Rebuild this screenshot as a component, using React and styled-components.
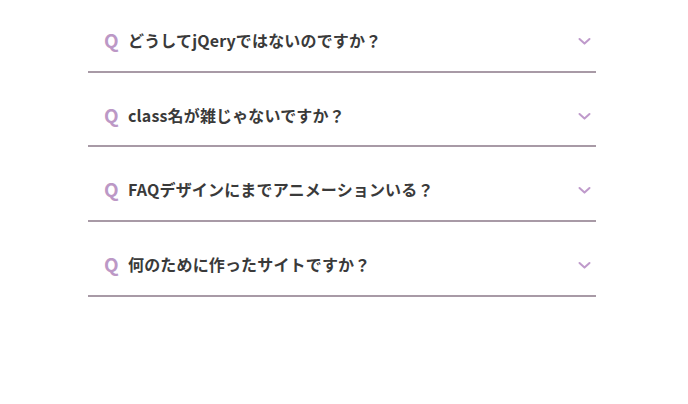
import React from "react";
import styled, { createGlobalStyle } from "styled-components";

const Global = createGlobalStyle`
  html, body { margin: 0; padding: 0; background: #fff; }
  body { font-family: "Noto Sans CJK JP", "Noto Sans", sans-serif; }
`;

const List = styled.div`
  width: 508px;
  margin-left: 88px;
  display: flex;
  flex-direction: column;
`;

const Item = styled.div`
  display: flex;
  align-items: center;
  padding: 30px 5px 18.67px 16px;
  border-bottom: 2px solid #a89aa6;
  &:first-child { padding-top: 28px; }
`;

const QMark = styled.span`
  font-family: "Noto Sans CJK JP", sans-serif;
  font-weight: 700;
  font-size: 19px;
  line-height: 24px;
  color: #bc98c6;
  width: 24px;
  flex: none;
`;

const Question = styled.span`
  flex: 1;
  font-weight: 700;
  font-size: 16px;
  line-height: 24px;
  color: #3a3a3a;
  letter-spacing: 0.01em;
`;

const Chevron = styled.svg`
  width: 13px;
  height: 9px;
  flex: none;
  margin-top: 3px;
`;

const items = [
  "どうしてjQeryではないのですか？",
  "class名が雑じゃないですか？",
  "FAQデザインにまでアニメーションいる？",
  "何のために作ったサイトですか？",
];

export default function App() {
  return (
    <>
      <Global />
      <List>
        {items.map((q) => (
          <Item key={q}>
            <QMark>Q</QMark>
            <Question>{q}</Question>
            <Chevron viewBox="0 0 13 9">
              <path d="M1.5 2 L6.5 6.6 L11.5 2" fill="none" stroke="#bf9acb" strokeWidth="2" strokeLinecap="round" strokeLinejoin="round" />
            </Chevron>
          </Item>
        ))}
      </List>
    </>
  );
}
